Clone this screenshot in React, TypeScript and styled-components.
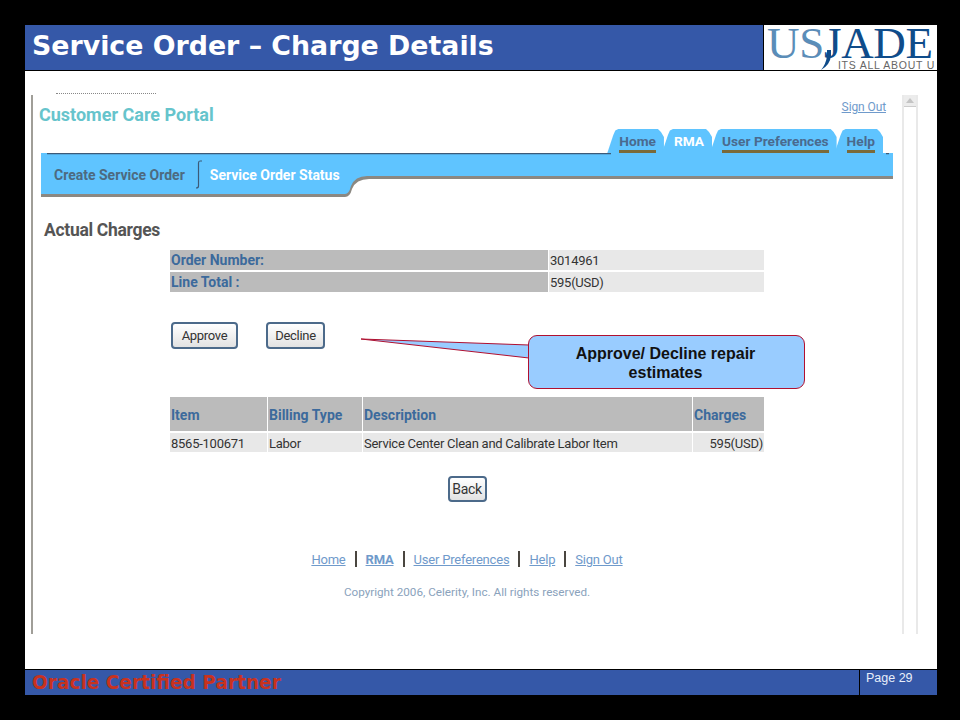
import React from "react";
import styled, { createGlobalStyle } from "styled-components";

const Global = createGlobalStyle`
  html, body { margin: 0; padding: 0; background: #000; }
  #root { width: 960px; height: 720px; overflow: hidden; }
`;

const portalFont = `font-family: Roboto, "Liberation Sans", sans-serif;`;

const Slide = styled.div`
  width: 912px;
  height: 670px;
  margin: 25px 0 0 25px;
  display: flex;
  flex-direction: column;
  background: #fff;
`;
const Header = styled.header`
  height: 45px;
  display: flex;
  background: #3558a8;
  border-bottom: 1px solid #000;
`;
const Title = styled.h1`
  flex: 1;
  margin: 0;
  padding-left: 7px;
  font: bold 26.8px/41px "DejaVu Sans", sans-serif;
  color: #fff;
`;
const Logo = styled.div`
  position: relative;
  width: 173px;
  border-left: 1px solid #000;
  background: #fff;
`;
const LogoWord = styled.div`
  font: 45px/34px "Liberation Serif", serif;
  color: #0f4c8a;
  padding: 1px 0 0 3px;
  letter-spacing: -0.3px;
  white-space: nowrap;
`;
const LogoUs = styled.span`
  color: #5b8db8;
`;
const LogoTag = styled.div`
  font: 10.5px/10px "Liberation Sans", sans-serif;
  letter-spacing: 0.75px;
  color: #666;
  text-align: right;
  padding-right: 2px;
  white-space: nowrap;
`;
const LogoSwoosh = styled.svg`
  position: absolute;
  left: 53px;
  top: 25px;
`;
const Body = styled.main`
  position: relative;
  flex: 1;
  display: flex;
  padding: 24px 0 35px 6px;
  min-height: 0;
`;
const Clipped = styled.div`
  position: absolute;
  left: 31px;
  top: 22px;
  width: 100px;
  border-top: 1px dotted #888;
`;
const Frame = styled.div`
  width: 869px;
  border-left: 2px solid #a09e98;
  display: flex;
  flex-direction: column;
  ${portalFont}
`;
const Scroll = styled.div`
  width: 12px;
  border-left: 2px solid #e9e9e9;
  border-right: 2px solid #e9e9e9;
`;
const ScrollUp = styled.div`
  height: 11px;
  background: #ececec;
  border-bottom: 1px solid #ccc;
  display: flex;
  justify-content: center;
  align-items: center;
`;
const TopRow = styled.div`
  height: 34px;
  display: flex;
  justify-content: space-between;
  align-items: flex-start;
  padding: 0 16px 0 6px;
`;
const Brand = styled.div`
  font-weight: bold;
  font-size: 18px;
  line-height: 24px;
  margin-top: 8px;
  color: #66c4cc;
`;
const SignOut = styled.a`
  font-size: 12px;
  line-height: 16px;
  margin-top: 4px;
  letter-spacing: -0.1px;
  color: #6f9acb;
  text-decoration: underline;
`;
const Tabs = styled.nav`
  height: 24px;
  display: flex;
  justify-content: flex-end;
  padding-right: 19px;
`;
const Tab = styled.div`
  height: 24px;
  box-sizing: border-box;
  padding: 4px 8px 0 12px;
  margin-left: -2px;
  background: #5fc4ff;
  clip-path: polygon(0 100%, 6px 25%, 8px 6%, 11px 0, calc(100% - 6px) 0, calc(100% - 3px) 3px, 100% 8px, 100% 100%);
`;
const TabLabel = styled.span<{ $active?: boolean }>`
  display: block;
  font-weight: bold;
  font-size: 13.7px;
  line-height: 17px;
  height: 20px;
  box-sizing: border-box;
  color: ${(p) => (p.$active ? "#fff" : "#4a6a8e")};
  border-bottom: ${(p) => (p.$active ? "none" : "3px solid #7a6a3a")};
`;
const Band = styled.div`
  position: relative;
  width: 852px;
  height: 44px;
  margin-left: 8px;
`;
const BandShape = styled.svg`
  position: absolute;
  left: 0;
  top: 0;
`;
const SubNav = styled.div`
  position: relative;
  display: flex;
  align-items: center;
  height: 43px;
  padding-left: 13px;
  font-weight: bold;
  font-size: 14px;
`;
const SubItem = styled.span<{ $active?: boolean }>`
  color: ${(p) => (p.$active ? "#fff" : "#4d6a80")};
`;
const SubSep = styled.svg`
  margin: 0 7px 0 10px;
`;
const Heading = styled.h2`
  margin: 21px 0 0 11px;
  font-size: 17.5px;
  letter-spacing: -0.3px;
  line-height: 24px;
  font-weight: bold;
  color: #555;
`;
const InfoGrid = styled.div`
  display: grid;
  grid-template-columns: 378px 215px;
  gap: 2px 1px;
  margin: 8px 0 0 137px;
  width: 594px;
`;
const LabelCell = styled.div`
  height: 20px;
  background: #bbb;
  padding-left: 1px;
  font-weight: bold;
  font-size: 14px;
  line-height: 21px;
  color: #3c6a9c;
`;
const ValueCell = styled.div`
  height: 20px;
  background: #e8e8e8;
  padding-left: 1px;
  font-size: 13px;
  letter-spacing: -0.25px;
  line-height: 21px;
  color: #333;
`;
const Actions = styled.div`
  display: flex;
  gap: 28px;
  margin: 30px 0 0 138px;
`;
const Btn = styled.button`
  box-sizing: border-box;
  height: 27px;
  padding: 0;
  border: 2px solid #4c6a8a;
  border-radius: 4px;
  background: linear-gradient(#fff, #e2e2e2);
  ${portalFont}
  font-size: 13px;
  letter-spacing: -0.3px;
  color: #333;
`;
const ApproveBtn = styled(Btn)`
  width: 67px;
`;
const DeclineBtn = styled(Btn)`
  width: 59px;
`;
const ItemGrid = styled.div`
  display: grid;
  grid-template-columns: 97px 94px 329px 71px;
  gap: 1px;
  margin: 48px 0 0 137px;
  width: 594px;
`;
const HeadCell = styled.div`
  height: 34px;
  background: #bbb;
  padding-left: 1px;
  font-weight: bold;
  font-size: 14px;
  line-height: 37px;
  color: #3c6a9c;
`;
const ItemCell = styled.div<{ $right?: boolean }>`
  height: 19px;
  margin-top: 1px;
  background: #e8e8e8;
  padding: 0 1px;
  font-size: 13px;
  letter-spacing: -0.25px;
  line-height: 21px;
  color: #333;
  text-align: ${(p) => (p.$right ? "right" : "left")};
`;
const BackRow = styled.div`
  display: flex;
  justify-content: center;
  margin: 24px 0 0 0;
  padding-right: 1px;
`;
const BackBtn = styled(Btn)`
  width: 39px;
  height: 26px;
  font-size: 14px;
`;
const FootLinks = styled.div`
  display: flex;
  justify-content: center;
  align-items: center;
  gap: 9px;
  margin-top: 48px;
  height: 18px;
  padding-right: 1px;
  font-size: 13px;
  letter-spacing: -0.2px;
`;
const FootLink = styled.a<{ $bold?: boolean }>`
  color: #6f9acb;
  text-decoration: underline;
  font-weight: ${(p) => (p.$bold ? "bold" : "normal")};
`;
const Bar = styled.span`
  width: 2px;
  height: 16px;
  background: #4a4640;
`;
const Copy = styled.div`
  text-align: center;
  margin-top: 16px;
  padding-right: 1px;
  font-size: 11.7px;
  line-height: 16px;
  color: #8aa2bc;
`;
const CalloutTail = styled.svg`
  position: absolute;
  left: 336px;
  top: 266px;
`;
const Callout = styled.div`
  position: absolute;
  left: 503px;
  top: 264px;
  width: 277px;
  height: 54px;
  box-sizing: border-box;
  background: #99ccff;
  border: 1px solid #b01030;
  border-radius: 9px;
  display: flex;
  align-items: center;
  justify-content: center;
  text-align: center;
  padding: 2px 32px 0 30px;
  font: bold 16px/19px "Liberation Sans", sans-serif;
  color: #111;
`;
const Footer = styled.footer`
  height: 25px;
  display: flex;
  background: #3558a8;
  border-top: 1px solid #000;
`;
const Partner = styled.div`
  flex: 1;
  padding-left: 7px;
  font: bold 18.55px/26px "DejaVu Sans", sans-serif;
  color: #c8321e;
`;
const PageNo = styled.div`
  width: 71px;
  padding-left: 6px;
  border-left: 1px solid #000;
  font: 12.5px/16px "Liberation Sans", sans-serif;
  color: #e8eefa;
`;

export default function App() {
  return (
    <>
      <Global />
      <Slide>
        <Header>
          <Title>Service Order – Charge Details</Title>
          <Logo>
            <LogoWord>
              <LogoUs>US</LogoUs>JADE
            </LogoWord>
            <LogoTag>ITS ALL ABOUT U</LogoTag>
            <LogoSwoosh width="20" height="20" viewBox="0 0 20 20">
              <path d="M14 0 L14 6 Q13 15 4 20 Q9 14 10 6 L10 0 Z" fill="#0f4c8a" />
            </LogoSwoosh>
          </Logo>
        </Header>
        <Body>
          <Clipped />
          <Frame>
            <TopRow>
              <Brand>Customer Care Portal</Brand>
              <SignOut>Sign Out</SignOut>
            </TopRow>
            <Tabs>
              <Tab><TabLabel>Home</TabLabel></Tab>
              <Tab><TabLabel $active>RMA</TabLabel></Tab>
              <Tab><TabLabel>User Preferences</TabLabel></Tab>
              <Tab><TabLabel>Help</TabLabel></Tab>
            </Tabs>
            <Band>
              <BandShape width="852" height="46" viewBox="0 0 852 46">
                <path d="M0 23 V44 H304 Q309 44 311 36 Q315 26 328 26 H852 V23 Z" fill="#77736c" opacity="0.85" />
                <path d="M0 0 H852 V23 H326 Q314 23 310 33 Q308 41 304 41 H0 Z" fill="#5fc4ff" />
                <path d="M6 0.5 H570 M845 0.5 H848" stroke="#3c5a78" strokeWidth="1.5" />
              </BandShape>
              <SubNav>
                <SubItem>Create Service Order</SubItem>
                <SubSep width="8" height="30" viewBox="0 0 8 30">
                  <path d="M7 1 H5 Q3.5 1 3.5 3 V26 Q3.5 28 1 28" fill="none" stroke="#3c5a78" strokeWidth="1.2" />
                </SubSep>
                <SubItem $active>Service Order Status</SubItem>
              </SubNav>
            </Band>
            <Heading>Actual Charges</Heading>
            <InfoGrid>
              <LabelCell>Order Number:</LabelCell>
              <ValueCell>3014961</ValueCell>
              <LabelCell>Line Total :</LabelCell>
              <ValueCell>595(USD)</ValueCell>
            </InfoGrid>
            <Actions>
              <ApproveBtn>Approve</ApproveBtn>
              <DeclineBtn>Decline</DeclineBtn>
            </Actions>
            <ItemGrid>
              <HeadCell>Item</HeadCell>
              <HeadCell>Billing Type</HeadCell>
              <HeadCell>Description</HeadCell>
              <HeadCell>Charges</HeadCell>
              <ItemCell>8565-100671</ItemCell>
              <ItemCell>Labor</ItemCell>
              <ItemCell>Service Center Clean and Calibrate Labor Item</ItemCell>
              <ItemCell $right>595(USD)</ItemCell>
            </ItemGrid>
            <BackRow>
              <BackBtn>Back</BackBtn>
            </BackRow>
            <FootLinks>
              <FootLink>Home</FootLink>
              <Bar />
              <FootLink $bold>RMA</FootLink>
              <Bar />
              <FootLink>User Preferences</FootLink>
              <Bar />
              <FootLink>Help</FootLink>
              <Bar />
              <FootLink>Sign Out</FootLink>
            </FootLinks>
            <Copy>Copyright 2006, Celerity, Inc. All rights reserved.</Copy>
          </Frame>
          <Scroll>
            <ScrollUp>
              <svg width="8" height="5" viewBox="0 0 8 5">
                <path d="M0 5 L4 0 L8 5 Z" fill="#c4c4c4" />
              </svg>
            </ScrollUp>
          </Scroll>
          <CalloutTail width="170" height="24" viewBox="0 0 170 24">
            <path d="M0 2 L168 8 L168 21 Z" fill="#99ccff" stroke="#b01030" strokeWidth="1" />
          </CalloutTail>
          <Callout>Approve/ Decline repair estimates</Callout>
        </Body>
        <Footer>
          <Partner>Oracle Certified Partner</Partner>
          <PageNo>Page 29</PageNo>
        </Footer>
      </Slide>
    </>
  );
}
